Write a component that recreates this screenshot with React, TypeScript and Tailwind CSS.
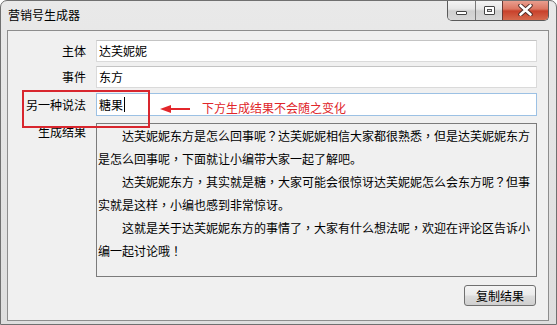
import React from "react";

function Caption() {
  return (
    <div className="flex h-[29px] items-start justify-between">
      <div className="pl-[7px] pt-[6px] text-[12px] leading-[16px] text-black">营销号生成器</div>
      <div className="mr-[7px] mt-[-1px] flex h-[21px] overflow-hidden rounded-b-[5px] border border-t-0 border-[#5a5a5a]">
        <div className="flex w-[28px] items-end justify-center border-r border-[#7a7a7a] bg-[linear-gradient(180deg,#f6f6f6_0%,#e6e6e6_45%,#cfcfcf_55%,#d8d8d8_100%)] pb-[5px]">
          <div className="h-[4px] w-[11px] rounded-[1px] border border-[#444] bg-white" />
        </div>
        <div className="flex w-[27px] items-center justify-center border-r border-[#6a3a34] bg-[linear-gradient(180deg,#f6f6f6_0%,#e6e6e6_45%,#cfcfcf_55%,#d8d8d8_100%)]">
          <div className="flex h-[9px] w-[11px] items-center justify-center rounded-[1px] border border-[#444] bg-white">
            <div className="h-[3px] w-[5px] border border-[#555] bg-[#ddd]" />
          </div>
        </div>
        <div className="flex w-[45px] items-center justify-center bg-[linear-gradient(180deg,#eaa394_0%,#dc7662_45%,#c8412b_55%,#d66a4e_100%)]">
          <svg width="15" height="12" viewBox="0 0 15 12">
            <path d="M2.5 1.5 L12.5 10.5 M12.5 1.5 L2.5 10.5" stroke="#4a2a25" strokeWidth="4.4" strokeLinecap="round" />
            <path d="M2.5 1.5 L12.5 10.5 M12.5 1.5 L2.5 10.5" stroke="#ffffff" strokeWidth="2.6" strokeLinecap="round" />
          </svg>
        </div>
      </div>
    </div>
  );
}

function Label({ children, top = false }: { children: React.ReactNode; top?: boolean }) {
  return (
    <div className={`mr-[10px] w-[78px] shrink-0 text-right text-[12px] leading-[16px] text-black ${top ? "pt-[1px]" : ""}`}>
      {children}
    </div>
  );
}

function Punct({ text }: { text: string }) {
  const parts = text.split(/([，？！])/);
  return (
    <>
      {parts.map((p, i) =>
        p === "，" || p === "？" || p === "！" ? (
          <span key={i} className="font-['Noto_Sans_CJK_TC',sans-serif]">
            {p}
          </span>
        ) : (
          <React.Fragment key={i}>{p}</React.Fragment>
        )
      )}
    </>
  );
}

export default function App() {
  return (
    <div className="relative flex h-[325px] w-[557px] flex-col overflow-hidden rounded-t-[7px] border border-[#707070] bg-[linear-gradient(180deg,#e9e9e9_0%,#e4e4e4_40%,#dedede_100%)] font-['Noto_Sans_CJK_SC','Microsoft_YaHei',sans-serif] text-[12px] text-black">
      <Caption />
      <div className="mb-[3px] ml-[6px] mr-[7px] flex h-[291px] flex-col border border-[#8d8d8d] bg-[#f0f0f0] pr-[11px]">
        <div className="mt-[9px] flex h-[22px] items-center">
          <Label>主体</Label>
          <div className="flex h-full flex-1 items-center border border-[#dadada] border-t-[#c4c4c4] bg-white pl-[2px]">达芙妮妮</div>
        </div>
        <div className="mt-[4px] flex h-[22px] items-center">
          <Label>事件</Label>
          <div className="flex h-full flex-1 items-center border border-[#dadada] border-t-[#c4c4c4] bg-white pl-[2px]">东方</div>
        </div>
        <div className="mt-[5px] flex h-[23px] items-center">
          <Label>另一种说法</Label>
          <div className="flex h-full flex-1 items-center border border-[#9cc1e4] bg-white pl-[2px]">
            <span>糖果</span>
            <span className="ml-[1px] h-[15px] w-[1px] bg-black" />
          </div>
        </div>
        <div className="mt-[7px] flex items-start">
          <Label top>生成结果</Label>
          <div className="h-[154px] flex-1 border border-[#7b7b7b] bg-[#f0f0f0] pl-[1px] text-[12px] leading-[23px] text-black">
            <p className="indent-[24px]">
              <Punct text="达芙妮妮东方是怎么回事呢？达芙妮妮相信大家都很熟悉，但是达芙妮妮东方是怎么回事呢，下面就让小编带大家一起了解吧。" />
            </p>
            <p className="indent-[24px]">
              <Punct text="达芙妮妮东方，其实就是糖，大家可能会很惊讶达芙妮妮怎么会东方呢？但事实就是这样，小编也感到非常惊讶。" />
            </p>
            <p className="indent-[24px]">
              <Punct text="这就是关于达芙妮妮东方的事情了，大家有什么想法呢，欢迎在评论区告诉小编一起讨论哦！" />
            </p>
          </div>
        </div>
        <div className="mt-[8px] flex justify-end">
          <button className="mr-[1px] h-[21px] w-[72px] rounded-[3px] border border-[#707070] bg-[linear-gradient(180deg,#f4f4f4_0%,#ebebeb_48%,#dddddd_52%,#cfcfcf_100%)] text-[12px] leading-[16px] text-black">
            复制结果
          </button>
        </div>
      </div>

      {/* annotation overlays */}
      <div className="absolute left-[21px] top-[89px] h-[38px] w-[128px] border-2 border-[#d8262e]" />
      <svg className="absolute left-[159px] top-[103px]" width="32" height="10" viewBox="0 0 32 10">
        <path d="M8 5 L30 5" stroke="#e3262b" strokeWidth="2" />
        <path d="M0 5 L11 1 L11 9 Z" fill="#e3262b" />
      </svg>
      <div className="absolute left-[201px] top-[99px] text-[12px] leading-[16px] text-[#e0262a]">下方生成结果不会随之变化</div>
    </div>
  );
}
